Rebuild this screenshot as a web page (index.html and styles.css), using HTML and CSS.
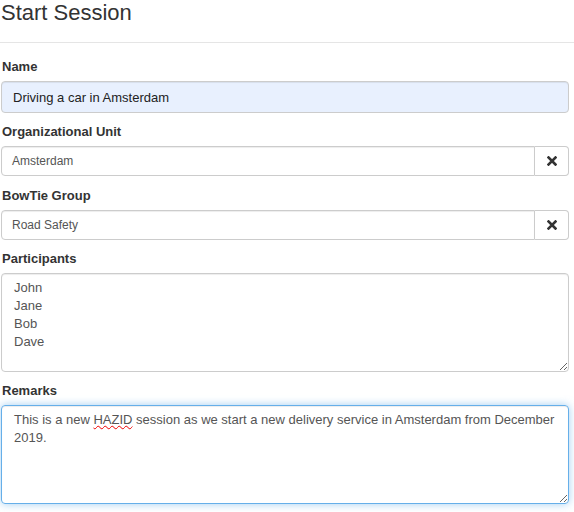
FILE: index.html
```html
<!DOCTYPE html>
<html>
<head>
<meta charset="utf-8">
<link rel="stylesheet" href="styles.css">
</head>
<body>
<div class="header">
  <h1 class="title">Start Session</h1>
</div>
<hr class="divider">
<form class="form">
  <div class="group">
    <label class="label">Name</label>
    <div class="control control-name">Driving a car in Amsterdam</div>
  </div>
  <div class="group">
    <label class="label">Organizational Unit</label>
    <div class="input-group">
      <div class="control control-sm">Amsterdam</div>
      <span class="btn-clear">
        <svg width="10" height="10" viewBox="0 0 10 10"><path d="M1.5 1.5 L8.5 8.5 M8.5 1.5 L1.5 8.5" stroke="#333" stroke-width="2.6" stroke-linecap="square"/></svg>
      </span>
    </div>
  </div>
  <div class="group">
    <label class="label">BowTie Group</label>
    <div class="input-group">
      <div class="control control-sm">Road Safety</div>
      <span class="btn-clear">
        <svg width="10" height="10" viewBox="0 0 10 10"><path d="M1.5 1.5 L8.5 8.5 M8.5 1.5 L1.5 8.5" stroke="#333" stroke-width="2.6" stroke-linecap="square"/></svg>
      </span>
    </div>
  </div>
  <div class="group">
    <label class="label">Participants</label>
    <div class="area">John<br>Jane<br>Bob<br>Dave</div>
  </div>
  <div class="group">
    <label class="label">Remarks</label>
    <div class="area area-focus">This is a new <span class="misspelled">HAZID</span> session as we start a new delivery service in Amsterdam from December 2019.</div>
  </div>
</form>
</body>
</html>
```
FILE: styles.css
```css
html, body {
  margin: 0;
  padding: 0;
  background: #fff;
  font-family: "Liberation Sans", Arial, sans-serif;
  color: #333;
}
.header {
  padding-left: 1px;
}
.title {
  margin: 0;
  font-size: 22px;
  font-weight: normal;
  line-height: 25px;
  color: #333;
}
.divider {
  margin: 17px 0 14px 0;
  border: 0;
  border-top: 1px solid #e5e5e5;
  height: 0;
}
.form {
  padding: 0 5px 0 1px;
}
.group {
  margin-bottom: 9.25px;
}
.label {
  display: block;
  font-size: 13px;
  font-weight: bold;
  line-height: 18px;
  padding-top: 1px;
  margin-bottom: 5px;
  padding-left: 1px;
  color: #333;
}
.control {
  box-sizing: border-box;
  border: 1px solid #ccc;
  border-radius: 4px;
  box-shadow: inset 0 1px 1px rgba(0,0,0,.075);
  background: #fff;
  color: #555;
  display: flex;
  align-items: center;
}
.control-name {
  height: 32px;
  padding: 0 11px;
  font-size: 13px;
  background: #e8f0fe;
  color: #222;
}
.input-group {
  display: flex;
  height: 30px;
}
.control-sm {
  flex: 1;
  height: 30px;
  padding: 0 10px;
  font-size: 12px;
  border-radius: 4px 0 0 4px;
}
.btn-clear {
  box-sizing: border-box;
  width: 34px;
  height: 30px;
  border: 1px solid #ccc;
  border-left: 0;
  border-radius: 0 4px 4px 0;
  background: #fff;
  display: flex;
  align-items: center;
  justify-content: center;
}
.area {
  box-sizing: border-box;
  height: 99px;
  border: 1px solid #ccc;
  border-radius: 4px;
  box-shadow: inset 0 1px 1px rgba(0,0,0,.075);
  padding: 5px 12px;
  font-size: 13px;
  line-height: 18px;
  color: #555;
  overflow: auto;
  resize: vertical;
}
.area-focus {
  border-color: #66afe9;
  box-shadow: inset 0 1px 1px rgba(0,0,0,.075), 0 0 8px rgba(102,175,233,.6);
}
.misspelled {
  text-decoration: underline wavy #e00;
  text-decoration-skip-ink: none;
  text-decoration-thickness: 1px;
}
```
